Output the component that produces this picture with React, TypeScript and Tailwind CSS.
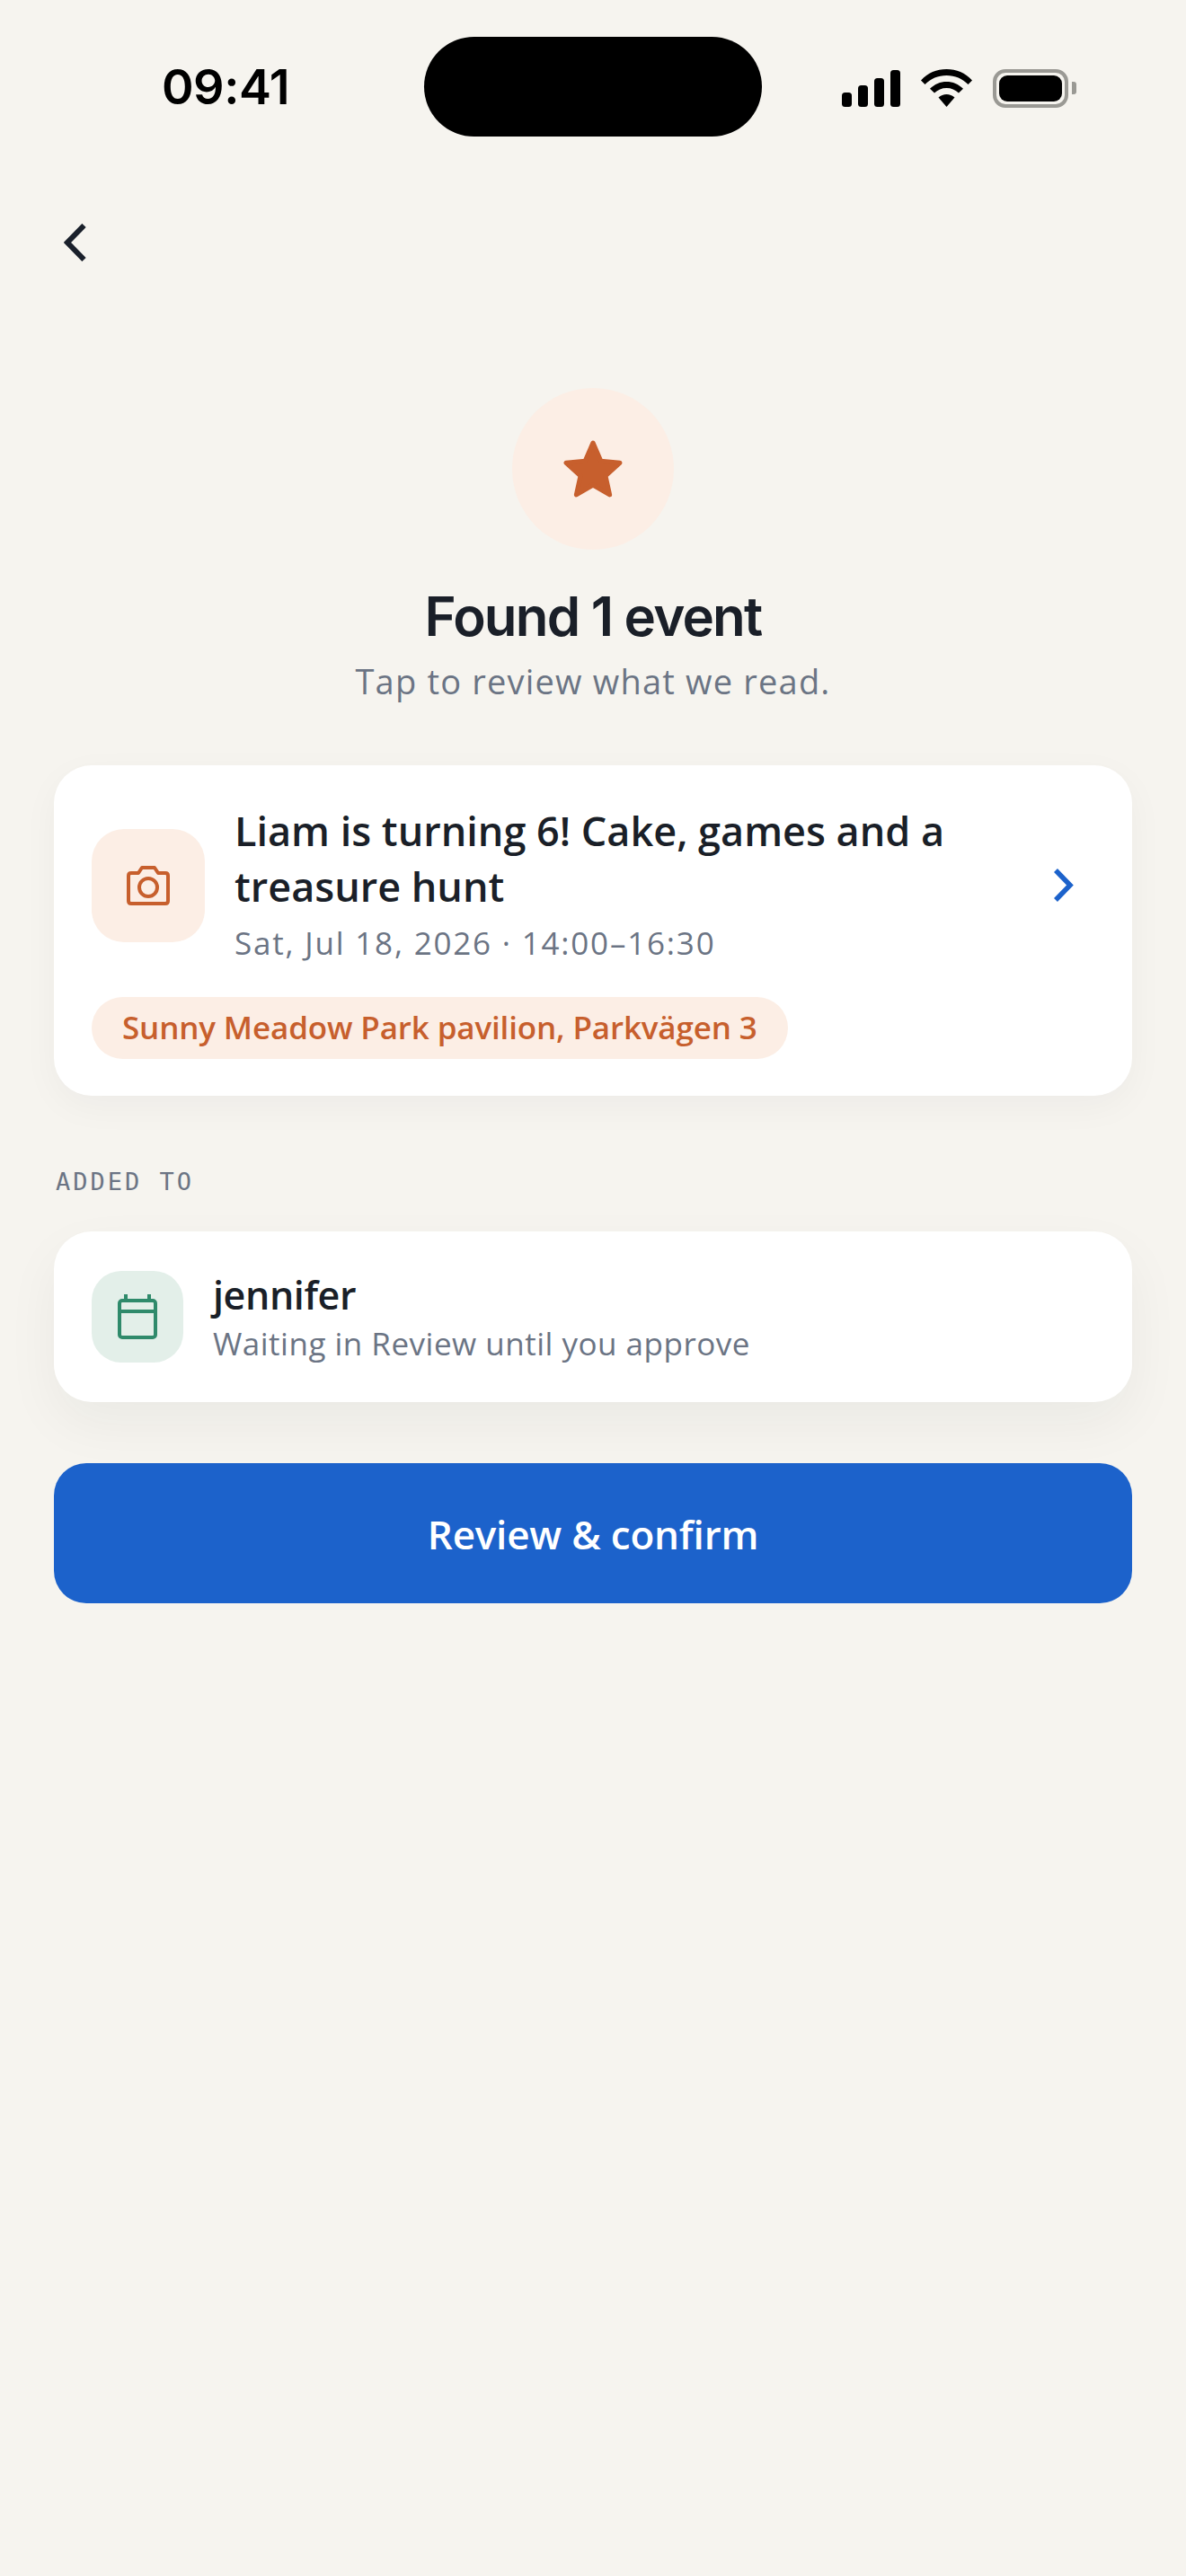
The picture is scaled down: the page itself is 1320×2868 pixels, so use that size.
const bodyFont = "font-['Open_Sans',sans-serif]";

function StatusIcons() {
  return (
    <div className="flex items-center h-full pl-[89px] pt-[3px]">
      <svg width="65" height="41" viewBox="0 0 65 41" fill="#000">
        <rect x="0" y="25" width="11" height="16" rx="3.5" />
        <rect x="18" y="17" width="11" height="24" rx="3.5" />
        <rect x="36" y="9" width="11" height="32" rx="3.5" />
        <rect x="54" y="0" width="11" height="41" rx="3.5" />
      </svg>
      <svg className="ml-[23px]" width="57" height="42" viewBox="0 0 57 42" fill="#000">
        <path d="M28.5 0C17.5 0 7.7 4 0 12.500L4.500 17C11 10.500 19 7 28.500 7C38 7 46 10.500 52.500 17L57 12.500C49.300 4 39.500 0 28.500 0Z" />
        <path d="M28.500 14C21.500 14 15.300 16.600 10 21.800L15 26.500C18.700 23 23.300 21 28.500 21C33.700 21 38.300 23 42 26.500L47 21.800C41.700 16.600 35.500 14 28.500 14Z" />
        <path d="M28.500 28C25.200 28 22 29.200 19.500 31.600L28.500 42L37.500 31.600C35 29.200 31.800 28 28.500 28Z" />
      </svg>
      <div className="ml-[23px] w-[84px] h-[43px] rounded-[14px] border-[4px] border-[#9a9994] p-[3px]">
        <div className="w-full h-full rounded-[9px] bg-black" />
      </div>
      <div className="ml-[4px] w-[5px] h-[14px] rounded-r-[3px] bg-[#9a9994]" />
    </div>
  );
}

export default function App() {
  return (
    <div className="w-[1320px] h-[2868px] bg-[#f6f4ef] overflow-hidden">
      {/* Status bar */}
      <div className="grid grid-cols-[472px_376px_1fr] pt-[41px] h-[152px]">
        <div className="flex items-center pl-[180px] font-['Inter',sans-serif] font-semibold text-[54px] leading-none text-black tracking-[-0.5px]">
          09:41
        </div>
        <div className="rounded-full bg-black" />
        <StatusIcons />
      </div>

      {/* Back */}
      <div className="pl-[71px] pt-[97px] h-[139px]">
        <svg width="25" height="42" viewBox="0 0 25 42" fill="none" stroke="#1a202b" strokeWidth="6">
          <path d="M22.500 2L4 21L22.500 40" />
        </svg>
      </div>

      {/* Header */}
      <div className="flex flex-col items-center pt-[141px]">
        <div className="w-[180px] h-[180px] rounded-full bg-[#fceee5] flex items-center justify-center">
          <svg width="68" height="66" viewBox="0 0 66 64" fill="#c75f2d" stroke="#c75f2d" strokeWidth="5" strokeLinejoin="round">
            <path d="M33 4L41.500 23.500L62 25.500L46.500 39.500L51 60L33 49.500L15 60L19.500 39.500L4 25.500L24.500 23.500Z" />
          </svg>
        </div>
        <h1 className="mt-[38px] font-['Inter',sans-serif] font-semibold text-[60px] leading-[72px] tracking-[-1.8px] text-[#1a1f28]">
          Found 1 event
        </h1>
        <p className={`mt-[10px] ${bodyFont} text-[38px] leading-[52px] tracking-[1.2px] text-[#6b7484]`}>
          Tap to review what we read.
        </p>
      </div>

      <div className="px-[60px]">
        {/* Event card */}
        <div className="mt-[68px] h-[368px] rounded-[42px] bg-white shadow-[0_12px_40px_rgba(26,31,40,0.04)] pt-[42px] px-[42px]">
          <div className="flex items-start">
            <div className="mt-[29px] w-[126px] h-[126px] rounded-[36px] bg-[#fceee5] flex items-center justify-center shrink-0">
              <svg width="48" height="44" viewBox="0 0 48 44" fill="none" stroke="#c75f2d" strokeWidth="4" strokeLinejoin="round">
                <path d="M5 8H13L17 2H31L35 8H43Q46 8 46 11V39Q46 42 43 42H5Q2 42 2 39V11Q2 8 5 8Z" />
                <circle cx="24" cy="24" r="10" />
              </svg>
            </div>
            <div className={`ml-[33px] w-[880px] ${bodyFont}`}>
              <div className="text-[45px] leading-[62px] font-semibold text-[#1a1f28]">
                Liam is turning 6! Cake, games and a treasure hunt
              </div>
              <div className="mt-[8px] text-[35px] leading-[48px] tracking-[1.8px] text-[#6b7484]">
                Sat, Jul 18, 2026 · 14:00–16:30
              </div>
            </div>
            <svg className="mt-[73px] ml-[31px]" width="23" height="37" viewBox="0 0 23 37" fill="none" stroke="#1c62cb" strokeWidth="5.500">
              <path d="M3 2L19 18.500L3 35" />
            </svg>
          </div>
          <div className={`mt-[36px] inline-flex items-center h-[69px] rounded-full bg-[#fceee5] px-[34px] ${bodyFont} text-[35px] font-semibold tracking-[-0.15px] text-[#c75f2d]`}>
            Sunny Meadow Park pavilion, Parkvägen 3
          </div>
        </div>

        {/* Added to */}
        <div className="mt-[82px] pl-[2px] font-['DejaVu_Sans_Mono',monospace] text-[27px] leading-[28px] tracking-[3px] text-[#6b7484]">
          ADDED TO
        </div>
        <div className="mt-[41px] h-[190px] rounded-[42px] bg-white shadow-[0_24px_60px_rgba(26,31,40,0.05)] pl-[42px] flex items-center">
          <div className="w-[102px] h-[102px] rounded-[33px] bg-[#e3efe9] flex items-center justify-center">
            <svg width="44" height="50" viewBox="0 0 44 50" fill="none" stroke="#2f8a6b" strokeWidth="4">
              <rect x="2" y="7" width="40" height="41" rx="3" />
              <path d="M2 19H42M9 0V7M35 0V7" />
            </svg>
          </div>
          <div className={`ml-[33px] ${bodyFont}`}>
            <div className="text-[43px] leading-[58px] font-semibold tracking-[-0.4px] text-[#1a1f28]">jennifer</div>
            <div className="mt-[1px] text-[35px] leading-[48px] tracking-[0.5px] text-[#6b7484]">Waiting in Review until you approve</div>
          </div>
        </div>

        {/* Confirm */}
        <button className={`mt-[68px] pt-[2px] w-full h-[156px] rounded-[36px] bg-[#1c62cb] text-white ${bodyFont} text-[44px] font-semibold tracking-[-0.2px]`}>
          Review &amp; confirm
        </button>
      </div>
    </div>
  );
}
